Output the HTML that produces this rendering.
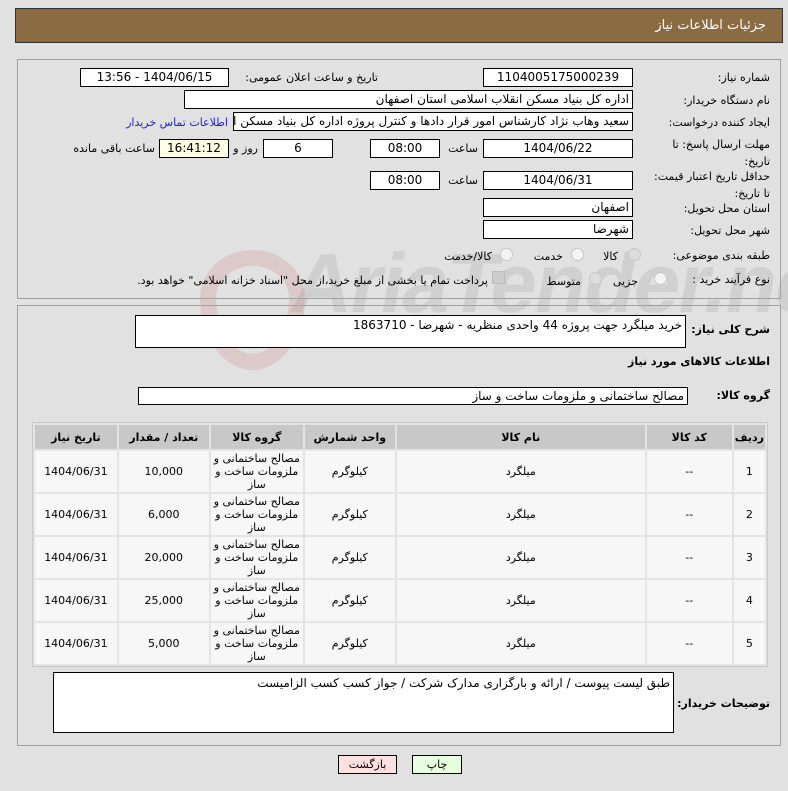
<!DOCTYPE html>
<html><head><meta charset="utf-8"><style>
body{margin:0;width:788px;height:791px;background:#e1e1e1;font-family:"DejaVu Sans","Liberation Sans",sans-serif;font-size:11px;color:#000;position:relative;overflow:hidden}
.a{position:absolute;white-space:nowrap}
.box{position:absolute;background:#fff;border:1px solid #000;box-sizing:border-box;direction:rtl;padding:0 3px;line-height:17px;white-space:nowrap;overflow:hidden;font-size:12px}
.c{text-align:center}
.l{position:absolute;direction:rtl;text-align:right;white-space:nowrap}
.b{font-weight:bold;font-size:11px}
.panel{position:absolute;border:1px solid #a0a0a0;box-sizing:border-box}
.rad{position:absolute;width:11px;height:11px;border-radius:50%;border:1px solid #c8c8c8;background:#f4f4f4}
table{position:absolute;left:32px;top:422px;width:736px;border-collapse:separate;border-spacing:2px;background:#e4e4e4;border:1px solid #c8c8c8;direction:rtl}
th{background:#c8c8c8;height:22px;font-weight:bold;font-size:11px}
td{background:#f7f7f7;height:39px;text-align:center;font-size:11px;line-height:13px}
</style></head><body>
<div class="a" style="left:15px;top:8px;width:768px;height:35px;background:#8b6b42;border:1px solid #333;box-sizing:border-box"></div>
<div class="l" style="right:22px;top:18px;color:#fff;font-size:13px">جزئیات اطلاعات نیاز</div>

<div style="position:absolute;left:250px;top:235px;font-size:84px;font-weight:bold;color:rgba(150,150,150,.22);font-family:'Liberation Sans',sans-serif;letter-spacing:-2px;transform:skewX(-10deg)">&nbsp;&nbsp;AriaTender.net</div>
<div style="position:absolute;left:200px;top:250px;width:105px;height:120px;border:16px solid rgba(200,100,100,.18);border-radius:50% 50% 50% 50%/40% 40% 60% 60%;box-sizing:border-box"></div>

<div class="panel" style="left:17px;top:59px;width:764px;height:240px"></div>
<div class="l" style="right:18px;top:71px">شماره نیاز:</div>
<div class="box c" style="left:483px;top:68px;width:150px;height:19px">1104005175000239</div>
<div class="l" style="right:410px;top:71px">تاریخ و ساعت اعلان عمومی:</div>
<div class="box c" style="left:80px;top:68px;width:149px;height:19px">1404/06/15 - 13:56</div>

<div class="l" style="right:18px;top:94px">نام دستگاه خریدار:</div>
<div class="box" style="left:184px;top:90px;width:449px;height:19px">اداره کل بنیاد مسکن انقلاب اسلامی استان اصفهان</div>

<div class="l" style="right:18px;top:116px">ایجاد کننده درخواست:</div>
<div class="box" style="left:233px;top:112px;width:400px;height:19px">سعید وهاب نژاد کارشناس امور قرار دادها و کنترل  پروژه اداره کل بنیاد مسکن انقلاب</div>
<div class="l" style="right:560px;top:116px;color:#2222cc">اطلاعات تماس خریدار</div>

<div class="l" style="right:18px;top:136px;line-height:17px;text-align:right">مهلت ارسال پاسخ: تا<br>تاریخ:</div>
<div class="box c" style="left:483px;top:139px;width:150px;height:19px">1404/06/22</div>
<div class="l" style="right:310px;top:142px">ساعت</div>
<div class="box c" style="left:370px;top:139px;width:70px;height:19px">08:00</div>
<div class="box c" style="left:263px;top:139px;width:70px;height:19px">6</div>
<div class="l" style="right:530px;top:142px">روز و</div>
<div class="box c" style="left:159px;top:139px;width:70px;height:19px;background:#ffffe6">16:41:12</div>
<div class="l" style="right:633px;top:142px">ساعت باقی مانده</div>

<div class="l" style="right:18px;top:168px;line-height:17px">حداقل تاریخ اعتبار قیمت:<br>تا تاریخ:</div>
<div class="box c" style="left:483px;top:171px;width:150px;height:19px">1404/06/31</div>
<div class="l" style="right:310px;top:174px">ساعت</div>
<div class="box c" style="left:370px;top:171px;width:70px;height:19px">08:00</div>

<div class="l" style="right:18px;top:202px">استان محل تحویل:</div>
<div class="box" style="left:483px;top:198px;width:150px;height:19px">اصفهان</div>
<div class="l" style="right:18px;top:224px">شهر محل تحویل:</div>
<div class="box" style="left:483px;top:220px;width:150px;height:19px">شهرضا</div>

<div class="l" style="right:18px;top:249px">طبقه بندی موضوعی:</div>
<div class="rad" style="left:628px;top:248px;background:#ddd"></div><div class="l" style="right:170px;top:250px">کالا</div>
<div class="rad" style="left:571px;top:248px"></div><div class="l" style="right:225px;top:250px">خدمت</div>
<div class="rad" style="left:500px;top:248px"></div><div class="l" style="right:296px;top:250px">کالا/خدمت</div>

<div class="l" style="right:18px;top:273px">نوع فرآیند خرید :</div>
<div class="rad" style="left:654px;top:272px"></div><div class="l" style="right:150px;top:275px">جزیی</div>
<div class="rad" style="left:589px;top:272px;background:#ddd"></div><div class="l" style="right:207px;top:275px">متوسط</div>
<div class="a" style="left:492px;top:271px;width:11px;height:11px;background:#ccc;border:1px solid #bbb"></div>
<div class="l" style="right:300px;top:274px">پرداخت تمام یا بخشی از مبلغ خرید،از محل "اسناد خزانه اسلامی" خواهد بود.</div>

<div class="panel" style="left:17px;top:305px;width:764px;height:441px"></div>
<div class="l b" style="right:18px;top:323px">شرح کلی نیاز:</div>
<div class="box" style="left:135px;top:315px;width:551px;height:33px;line-height:18px">خرید میلگرد جهت پروژه 44 واحدی منظریه - شهرضا - 1863710</div>
<div class="l b" style="right:18px;top:355px">اطلاعات کالاهای مورد نیاز</div>
<div class="l b" style="right:18px;top:389px">گروه کالا:</div>
<div class="box" style="left:138px;top:387px;width:550px;height:18px">مصالح ساختمانی و ملزومات ساخت و ساز</div>

<table>
<tr><th style="width:22px">ردیف</th><th style="width:83px">کد کالا</th><th style="width:246px">نام کالا</th><th style="width:88px">واحد شمارش</th><th style="width:90px">گروه کالا</th><th style="width:88px">تعداد / مقدار</th><th>تاریخ نیاز</th></tr>
<tr><td>1</td><td>--</td><td>میلگرد</td><td>کیلوگرم</td><td>مصالح ساختمانی و ملزومات ساخت و ساز</td><td>10,000</td><td>1404/06/31</td></tr>
<tr><td>2</td><td>--</td><td>میلگرد</td><td>کیلوگرم</td><td>مصالح ساختمانی و ملزومات ساخت و ساز</td><td>6,000</td><td>1404/06/31</td></tr>
<tr><td>3</td><td>--</td><td>میلگرد</td><td>کیلوگرم</td><td>مصالح ساختمانی و ملزومات ساخت و ساز</td><td>20,000</td><td>1404/06/31</td></tr>
<tr><td>4</td><td>--</td><td>میلگرد</td><td>کیلوگرم</td><td>مصالح ساختمانی و ملزومات ساخت و ساز</td><td>25,000</td><td>1404/06/31</td></tr>
<tr><td>5</td><td>--</td><td>میلگرد</td><td>کیلوگرم</td><td>مصالح ساختمانی و ملزومات ساخت و ساز</td><td>5,000</td><td>1404/06/31</td></tr>
</table>

<div class="l b" style="right:18px;top:697px">توضیحات خریدار:</div>
<div class="box" style="left:53px;top:672px;width:621px;height:61px;line-height:20px">طبق لیست پیوست / ارائه و بارگزاری مدارک شرکت / جواز کسب کسب الزامیست</div>

<div class="a c" style="left:338px;top:755px;width:59px;height:19px;background:#ffe0e0;border:1px solid #000;box-sizing:border-box;line-height:17px">بازگشت</div>
<div class="a c" style="left:412px;top:755px;width:50px;height:19px;background:#e6ffe0;border:1px solid #000;box-sizing:border-box;line-height:17px">چاپ</div>
</body></html>
